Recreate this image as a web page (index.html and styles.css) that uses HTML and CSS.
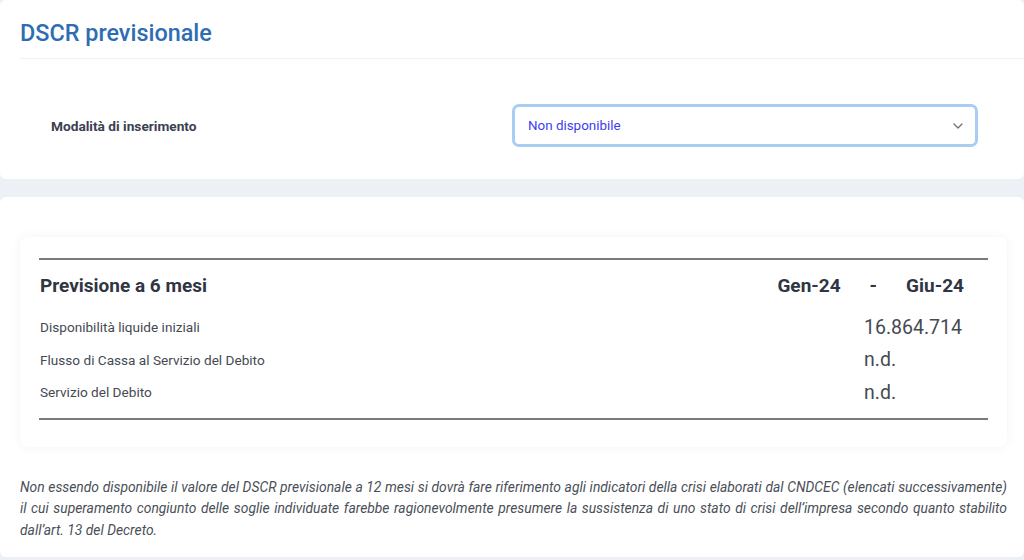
FILE: index.html
```html
<!DOCTYPE html>
<html lang="it">
<head>
    <meta charset="UTF-8">
    <meta name="viewport" content="width=device-width, initial-scale=1.0">
    <title>DSCR previsionale</title>
    <link rel="stylesheet" href="styles.css">
</head>
<body>
    <!-- Intestazione e scelta modalità -->
    <section class="card card-top">
        <h1 class="card-title">DSCR previsionale</h1>
        <div class="form-row">
            <label class="form-label">Modalità di inserimento</label>
            <div class="select-box">
                <span class="select-value">Non disponibile</span>
                <svg class="select-chevron" width="10" height="6" viewBox="0 0 10 6">
                    <path d="M1 1l4 4 4-4" fill="none" stroke="#6b6f76" stroke-width="1.3" stroke-linecap="round" stroke-linejoin="round"/>
                </svg>
            </div>
        </div>
    </section>

    <!-- Tabella previsione -->
    <section class="card card-main">
        <div class="forecast">
            <div class="forecast-table">
                <div class="forecast-head">
                    <span class="head-title">Previsione a 6 mesi</span>
                    <span class="head-period">
                        <span>Gen-24</span>
                        <span>-</span>
                        <span>Giu-24</span>
                    </span>
                </div>
                <div class="forecast-row">
                    <span class="row-label">Disponibilità liquide iniziali</span>
                    <span class="row-value">16.864.714</span>
                </div>
                <div class="forecast-row">
                    <span class="row-label">Flusso di Cassa al Servizio del Debito</span>
                    <span class="row-value">n.d.</span>
                </div>
                <div class="forecast-row">
                    <span class="row-label">Servizio del Debito</span>
                    <span class="row-value">n.d.</span>
                </div>
            </div>
        </div>

        <p class="note">Non essendo disponibile il valore del DSCR previsionale a 12 mesi si dovrà fare riferimento agli indicatori della crisi elaborati dal CNDCEC (elencati successivamente) il cui superamento congiunto delle soglie individuate farebbe ragionevolmente presumere la sussistenza di uno stato di crisi dell’impresa secondo quanto stabilito dall’art. 13 del Decreto.</p>
    </section>
</body>
</html>
```

FILE: styles.css
```css
/* Base */
body {
    margin: 0;
    background: #edf1f5;
    font-family: Roboto, "Liberation Sans", Arial, sans-serif;
    color: #3a3f48;
}

.card {
    background: #fff;
    border-radius: 6px;
}

/* Card superiore */
.card-top {
    height: 179px;
    margin-bottom: 18px;
}

.card-title {
    margin: 0 0 0 20px;
    padding: 20px 0 12px;
    font-size: 23.4px;
    line-height: 26px;
    font-weight: 500;
    color: #2e6db4;
    border-bottom: 1px solid #f0f2f4;
}

.form-row {
    display: flex;
    align-items: center;
    padding: 45px 0 0 51px;
}

.form-label {
    width: 461px;
    font-size: 13.7px;
    font-weight: 700;
    color: #3b4150;
}

.select-box {
    box-sizing: border-box;
    width: 466px;
    height: 43px;
    display: flex;
    align-items: center;
    justify-content: space-between;
    padding: 0 12px 0 13px;
    border: 3px solid #a8cdf2;
    border-radius: 7px;
}

.select-value {
    font-size: 13.4px;
    color: #3c3cf0;
}

/* Card principale */
.card-main {
    padding: 40px 17px 16px 20px;
}

.forecast {
    padding: 21px 19px 27px;
    border-radius: 8px;
    box-shadow: 0 0 12px rgba(0, 0, 0, 0.05);
}

.forecast-table {
    border-top: 2px solid #7a7a7a;
    border-bottom: 2px solid #7a7a7a;
    padding-bottom: 9px;
}

.forecast-head {
    display: flex;
    justify-content: space-between;
    align-items: center;
    height: 51px;
    padding: 0 24px 0 1px;
    font-size: 19px;
    font-weight: 700;
    color: #2f3542;
}

.head-period {
    display: flex;
    gap: 29px;
}

.forecast-row {
    display: grid;
    grid-template-columns: 1fr 124px;
    align-items: center;
    height: 32.5px;
    padding-left: 1px;
}

.row-label {
    font-size: 13.6px;
    color: #454a52;
}

.row-value {
    font-size: 19.5px;
    color: #454a52;
}

.note {
    margin: 30px 0 0;
    font-size: 13.85px;
    line-height: 21.5px;
    font-style: italic;
    text-align: justify;
    color: #4a4f57;
}
```
